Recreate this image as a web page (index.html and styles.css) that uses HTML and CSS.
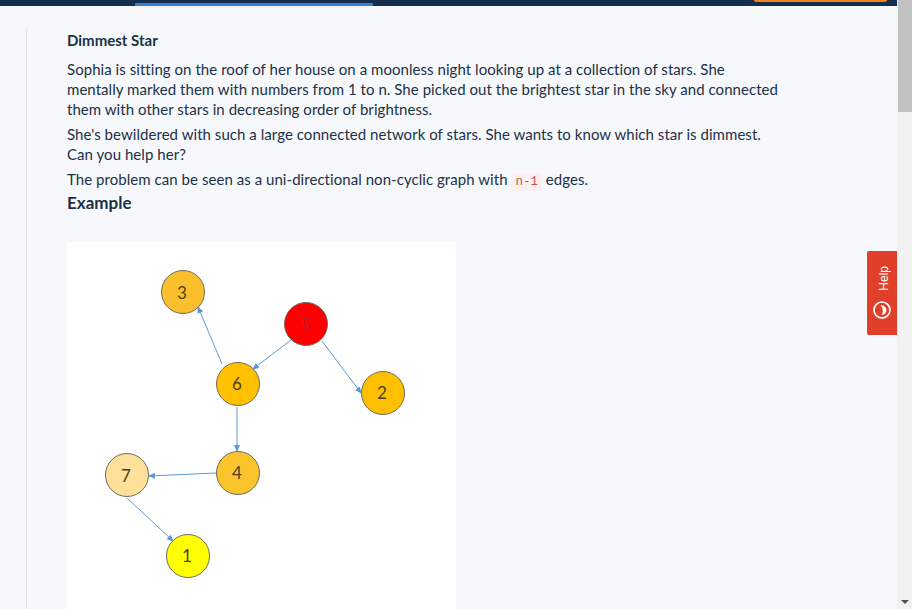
FILE: index.html
```html
<!DOCTYPE html>
<html lang="en">
<head>
  <meta charset="UTF-8">
  <meta name="viewport" content="width=device-width, initial-scale=1.0">
  <title>Dimmest Star</title>
  <link rel="stylesheet" href="styles.css">
</head>
<body>

<div class="page">
  <div class="main">
    <div class="topbar">
      <div class="topbar-tab"></div>
      <div class="topbar-btn"></div>
    </div>

    <div class="content">
      <div class="problem">
        <h4>Dimmest Star</h4>
        <p>Sophia is sitting on the roof of her house on a moonless night looking up at a collection of stars. She mentally marked them with numbers from 1 to n. She picked out the brightest star in the sky and connected them with other stars in decreasing order of brightness.</p>
        <p>She's bewildered with such a large connected network of stars. She wants to know which star is dimmest. Can you help her?</p>
        <p>The problem can be seen as a uni-directional non-cyclic graph with <code>n-1</code> edges.</p>
        <h3>Example</h3>

        <div class="figure">
          <svg class="graph" width="389" height="372" viewBox="0 0 389 372">
            <defs>
              <marker id="arrow" markerWidth="7" markerHeight="6" refX="6" refY="3" orient="auto">
                <path d="M0 0L7 3L0 6z" fill="#5b9bd5"/>
              </marker>
            </defs>
            <g class="edges">
              <line x1="155" y1="122" x2="131" y2="65" marker-end="url(#arrow)"/>
              <line x1="224" y1="98" x2="186" y2="127" marker-end="url(#arrow)"/>
              <line x1="255" y1="99" x2="294" y2="151" marker-end="url(#arrow)"/>
              <line x1="170" y1="165" x2="170" y2="209" marker-end="url(#arrow)"/>
              <line x1="149" y1="231" x2="82" y2="234" marker-end="url(#arrow)"/>
              <line x1="60" y1="256" x2="106" y2="299" marker-end="url(#arrow)"/>
            </g>
            <g class="node">
              <circle cx="116" cy="50" r="21.5" fill="#fbbe2c"/>
              <text x="115" y="57">3</text>
            </g>
            <g class="node">
              <circle cx="239" cy="82" r="21.5" fill="#ff0000"/>
              <text class="on-red" x="239" y="89">5</text>
            </g>
            <g class="node">
              <circle cx="171" cy="142" r="21.5" fill="#ffc000"/>
              <text x="170" y="148">6</text>
            </g>
            <g class="node">
              <circle cx="316" cy="151" r="21.5" fill="#ffc000"/>
              <text x="315" y="157">2</text>
            </g>
            <g class="node">
              <circle cx="171" cy="231" r="21.5" fill="#fcc42c"/>
              <text x="170" y="237">4</text>
            </g>
            <g class="node">
              <circle cx="60" cy="233" r="21.5" fill="#ffe09a"/>
              <text x="59" y="240">7</text>
            </g>
            <g class="node">
              <circle cx="121" cy="314" r="21.5" fill="#ffff00"/>
              <text x="120" y="320">1</text>
            </g>
          </svg>
        </div>
      </div>
    </div>
  </div>

  <div class="scrollbar">
    <div class="scroll-thumb"></div>
    <div class="scroll-track"></div>
    <div class="scroll-down"></div>
  </div>
</div>

<div class="help-tab">
  <span class="help-label">Help</span>
  <svg class="help-icon" width="20" height="20" viewBox="0 0 20 20">
    <circle cx="10" cy="10" r="8" fill="none" stroke="#fff" stroke-width="1.6"/>
    <path d="M8.5 5C12.5 5 15 8 14.2 11.5C13.6 13.8 11.5 15 9.5 15C11.5 12.5 11.3 8.5 8.5 5z" fill="#fff"/>
  </svg>
</div>

</body>
</html>
```

FILE: styles.css
```css
html, body {
  margin: 0;
  height: 100%;
  overflow: hidden;
}
body {
  font-family: Lato, "Noto Sans", sans-serif;
  color: #1c3148;
  background-color: #f6f8fb;
}
.page {
  display: flex;
  height: 609px;
}
.main {
  flex: 1;
  min-width: 0;
  overflow: hidden;
}

/* top bar, mostly scrolled away */
.topbar {
  display: flex;
  justify-content: space-between;
  align-items: flex-start;
  height: 6px;
  padding: 0 10px 0 135px;
  background-color: #142f4d;
}
.topbar-tab {
  width: 238px;
  height: 3px;
  border-bottom: 3px solid #3a7fcf;
}
.topbar-btn {
  width: 133px;
  height: 2px;
  background-color: #f5821f;
  border-radius: 0 0 3px 3px;
}

.content {
  padding: 24px 0 0 26px;
}
.problem {
  border-left: 1px solid #e2e5ea;
  padding-left: 40px;
  max-width: 716px;
}
h4 {
  margin: -1px 0 8px;
  font-size: 15px;
  line-height: 22px;
  font-weight: 700;
}
h3 {
  margin: -1px 0 29px;
  font-size: 17px;
  line-height: 20px;
  font-weight: 700;
}
p {
  margin: 0 0 5px;
  font-size: 15px;
  line-height: 20px;
  letter-spacing: 0.05px;
}
code {
  padding: 2px 4px;
  font-family: "Liberation Mono", monospace;
  font-size: 12.5px;
  line-height: 1;
  letter-spacing: 0;
  color: #c95050;
  background-color: #fbf0f0;
  border-radius: 3px;
}

.figure {
  width: 389px;
  background-color: #fff;
}
.graph {
  display: block;
}
.edges line {
  stroke: #5b9bd5;
  stroke-width: 1;
}
.node circle {
  stroke: #6e6c58;
  stroke-width: 1;
}
.node text {
  font-family: Lato, sans-serif;
  font-size: 17px;
  fill: #4a4020;
  text-anchor: middle;
}
.node .on-red {
  fill: #b3202c;
}

.scrollbar {
  display: flex;
  flex-direction: column;
  flex: 0 0 15px;
  background-color: #f1f1f1;
}
.scroll-thumb {
  height: 112px;
  margin-left: 1px;
  background-color: #c1c1c1;
}
.scroll-track {
  flex: 1;
}
.scroll-down {
  width: 0;
  height: 0;
  margin: 0 0 5px 4px;
  border-left: 4px solid transparent;
  border-right: 4px solid transparent;
  border-top: 4px solid #505050;
}

/* floats over the page */
.help-tab {
  position: fixed;
  left: 867px;
  top: 251px;
  box-sizing: border-box;
  display: flex;
  flex-direction: column;
  align-items: center;
  width: 30px;
  height: 84px;
  padding-top: 15px;
  background-color: #e0402a;
  border-radius: 2px 0 0 2px;
  color: #fff;
}
.help-label {
  writing-mode: vertical-rl;
  transform: rotate(180deg);
  margin-left: 3px;
  font-family: "Liberation Sans", sans-serif;
  font-size: 12px;
  line-height: 14px;
}
.help-icon {
  margin-top: 9px;
}
```
